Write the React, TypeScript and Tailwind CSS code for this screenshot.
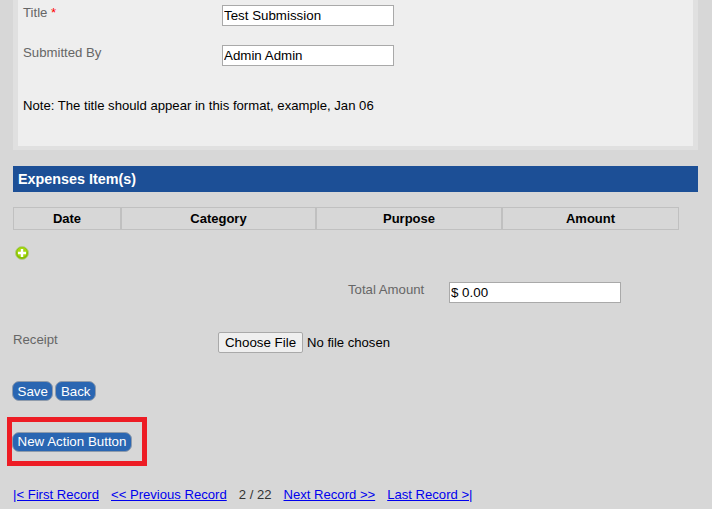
const fieldClass =
  "h-[21px] w-[172px] border border-[#a9a9a9] bg-white pl-px text-[13.33px] text-black outline-none";
const labelClass = "text-[13.2px] leading-4 text-[#666]";
const actionClass =
  "h-5 rounded-[7px] border border-[#8f9bab] bg-[#2a66b2] px-[4.5px] pt-px text-[13.33px] leading-4 text-white";
const linkClass = "text-[13.1px] leading-4 text-[#0000ee] underline";

function PlusIcon() {
  return (
    <svg width="14" height="14" viewBox="0 0 14 14" className="block">
      <circle cx="7" cy="7" r="6.5" fill="#86bf00" stroke="#b4cc88" />
      <circle cx="7" cy="6.2" r="5" fill="#a6d80f" />
      <path d="M7 3v8M3 7h8" stroke="#fff" strokeWidth="2.4" />
    </svg>
  );
}

export default function App() {
  return (
    <div className="h-[509px] w-[712px] overflow-hidden bg-[#d7d7d7] font-['Liberation_Sans',Arial,sans-serif]">
      <div className="ml-[13px] w-[685px] bg-[#e0e0e0] px-[5px] pb-1">
        <div className="h-[146px] w-[675px] bg-[#eeeeee] pl-[5px] pt-[5px]">
          <div className="flex h-[40px]">
            <div className={`w-[199px] ${labelClass}`}>
              Title <span className="text-[#f00]">*</span>
            </div>
            <input readOnly value="Test Submission" className={fieldClass} />
          </div>
          <div className="flex h-[40px]">
            <div className={`w-[199px] ${labelClass}`}>Submitted By</div>
            <input readOnly value="Admin Admin" className={fieldClass} />
          </div>
          <p className="pt-[13px] text-[13.14px] leading-4 text-black">
            Note: The title should appear in this format, example, Jan 06
          </p>
        </div>
      </div>

      <div className="pl-[13px]">
        <div className="mt-4 flex h-[26px] w-[685px] items-center bg-[#1c4f96] pl-[5px] pt-px text-[14.35px] font-bold text-white">
          Expenses Item(s)
        </div>

        <div className="mt-[15px] grid h-[23px] w-[666px] grid-cols-[108px_195px_186px_177px] text-center text-[13px] font-bold text-black">
          <div className="flex items-center justify-center border border-[#c0c0c0]">Date</div>
          <div className="flex items-center justify-center border border-[#c0c0c0]">Category</div>
          <div className="flex items-center justify-center border border-[#c0c0c0]">Purpose</div>
          <div className="flex items-center justify-center border border-[#c0c0c0]">Amount</div>
        </div>

        <div className="ml-[2px] mt-4">
          <PlusIcon />
        </div>

        <div className="ml-[335px] mt-[22px] flex">
          <div className={`w-[101px] ${labelClass}`}>Total Amount</div>
          <input readOnly value="$ 0.00" className={fieldClass} />
        </div>

        <div className="mt-[29px] flex">
          <div className={`w-[205px] ${labelClass}`}>Receipt</div>
          <div className="flex items-center">
            <button className="h-[21px] w-[85px] rounded-[2px] border border-[#a9a9a9] bg-[#efefef] text-[13.33px] text-black">
              Choose File
            </button>
            <span className="ml-[4px] text-[13.1px] text-black">No file chosen</span>
          </div>
        </div>

        <div className="-ml-px mt-[28px] flex gap-[2px]">
          <button className={actionClass}>Save</button>
          <button className={actionClass}>Back</button>
        </div>

        <div className="-ml-[6px] mt-4 flex h-[49px] w-[140px] items-center border-[5px] border-[#ed1c24]">
          <button className={actionClass}>New Action Button</button>
        </div>

        <div className="mt-[21px] flex gap-3 whitespace-nowrap">
          <a className={linkClass}>|&lt; First Record</a>
          <a className={linkClass}>&lt;&lt; Previous Record</a>
          <span className="text-[13.1px] leading-4 text-[#333]">2 / 22</span>
          <a className={linkClass}>Next Record &gt;&gt;</a>
          <a className={linkClass}>Last Record &gt;|</a>
        </div>
      </div>
    </div>
  );
}
